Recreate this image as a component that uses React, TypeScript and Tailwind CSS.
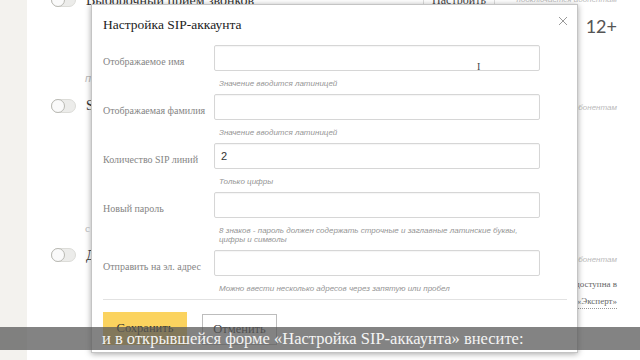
import React from "react";

function Toggle() {
  return (
    <div className="relative w-[25px] h-[14px] rounded-full bg-[#ececea] border border-[#dcdcd8]">
      <div className="absolute left-[-1px] top-[-1px] w-[14px] h-[14px] rounded-full bg-[#fafafa] border border-[#b9b9b3]" />
    </div>
  );
}

function Row({ label, value, hint }: { label: string; value?: string; hint: React.ReactNode }) {
  return (
    <div className="flex mb-[6px]">
      <div className="w-[111px] pt-[11px] text-[10px] leading-[12px] text-[#858585] font-['Liberation_Serif',serif]">
        {label}
      </div>
      <div className="w-[326px]">
        <div className="h-[26px] border border-[#d6d6d6] rounded-[2px] shadow-[inset_0_1px_1px_rgba(0,0,0,0.04)] flex items-center pl-[6px] text-[11px] text-[#333] font-['Liberation_Sans',sans-serif]">
          {value}
        </div>
        <div className="mt-[8px] pl-[5px] text-[8px] leading-[9px] italic text-[#959595] font-['Liberation_Sans',sans-serif]">
          {hint}
        </div>
      </div>
    </div>
  );
}

export default function App() {
  return (
    <div className="relative w-[640px] h-[360px] overflow-hidden bg-white flex font-['Liberation_Serif',serif]">
      <div className="w-[27px] shrink-0 bg-[#f3f2ee]" />
      <div className="flex-1 flex">
        <div className="w-[396px] pl-[24px] -mt-[7px]">
          <div className="flex items-center gap-[10px] h-[14px]">
            <Toggle />
            <span className="text-[14px] text-[#333]">Выборочный прием звонков</span>
          </div>
          <div className="mt-[63px] pl-[34px] text-[11px] italic text-[#bbb] font-['Liberation_Sans',sans-serif]">п</div>
          <div className="mt-[12px] flex items-center gap-[10px] h-[14px]">
            <Toggle />
            <span className="text-[14px] text-[#333]">SIP</span>
          </div>
          <div className="mt-[107px] pl-[34px] text-[11px] text-[#bbb]">с</div>
          <div className="mt-[12px] flex items-center gap-[10px] h-[14px]">
            <Toggle />
            <span className="text-[14px] text-[#333]">Дополнительно</span>
          </div>
        </div>
        <div className="w-[72px] -mt-[12px] h-[24px] border-x border-[#ddd] flex items-center justify-center text-[12px] text-[#444]">
          Настроить
        </div>
        <div className="flex-1 flex flex-col items-end pr-[23px] -mt-[6px]">
          <div className="text-[8px] italic text-[#bbb] font-['Liberation_Sans',sans-serif]">подключается абонентам</div>
          <div className="mt-[10px] text-[18px] leading-[20px] text-[#555] font-['Lato',sans-serif]">12+</div>
          <div className="mt-[66px] text-[8px] italic text-[#bbb] font-['Liberation_Sans',sans-serif]">абонентам</div>
          <div className="mt-[140px] text-[8px] italic text-[#bbb] font-['Liberation_Sans',sans-serif]">абонентам</div>
          <div className="mt-[12px] text-[9px] text-[#666]">доступна в</div>
          <div className="mt-[3px] text-[9px] text-[#666] border-b border-dotted border-[#999]">«Эксперт»</div>
        </div>
      </div>

      <div className="absolute left-[91px] top-[4px] w-[487px] h-[349px] bg-white border border-[#c4c4c4] shadow-[0_1px_6px_rgba(0,0,0,0.35)] pl-[11px] pr-[10px] pt-[10px]">
        <svg className="absolute right-[9px] top-[11px]" width="10" height="10" viewBox="0 0 10 10">
          <path d="M1 1L9 9M9 1L1 9" stroke="#9a9a9a" strokeWidth="1" />
        </svg>
        <div className="text-[13.5px] leading-[20px] text-[#222]">Настройка SIP-аккаунта</div>
        <div className="mt-[10px]">
          <Row label="Отображаемое имя" hint="Значение вводится латиницей" />
          <Row label="Отображаемая фамилия" hint="Значение вводится латиницей" />
          <Row label="Количество SIP линий" value="2" hint="Только цифры" />
          <Row
            label="Новый пароль"
            hint={
              <>
                8 знаков - пароль должен содержать строчные и заглавные латинские буквы,
                <br />
                цифры и символы
              </>
            }
          />
          <Row label="Отправить на эл. адрес" hint="Можно ввести несколько адресов через запятую или пробел" />
        </div>
        <div className="h-px bg-[#e2e2e2]" />
        <div className="mt-[12px] flex gap-[15px]">
          <div className="w-[84px] h-[33px] bg-[#fbd35f] flex items-center justify-center text-[12.5px] text-[#333]">
            Сохранить
          </div>
          <div className="mt-[2px] w-[75px] h-[31px] border border-[#bdbdbd] flex items-center justify-center text-[12.5px] text-[#333]">
            Отменить
          </div>
        </div>
        <div className="absolute left-[385px] top-[57px] text-[10px] leading-[10px] text-[#444]">I</div>
      </div>

      <div className="absolute left-0 right-0 top-[327px] h-[23px] bg-[#5a5a5a]/75 flex items-center pl-[102px]">
        <span className="text-[16.5px] leading-[20px] text-[#f4f4f4]">
          и в открывшейся форме «Настройка SIP-аккаунта» внесите:
        </span>
      </div>
    </div>
  );
}
